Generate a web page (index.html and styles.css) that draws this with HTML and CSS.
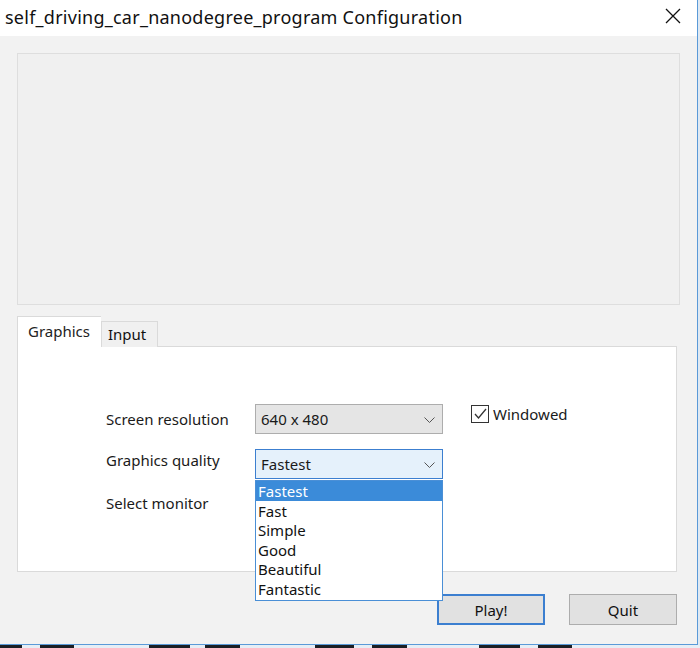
FILE: index.html
```html
<!DOCTYPE html>
<html>
<head>
<meta charset="utf-8">
<link rel="stylesheet" href="styles.css">
</head>
<body>
<div class="window">
  <div class="titlebar">
    <span class="title">self_driving_car_nanodegree_program Configuration</span>
    <svg class="close" width="16" height="16" viewBox="0 0 16 16"><path d="M1 1 L15 15 M15 1 L1 15" stroke="#111" stroke-width="1.3" fill="none"/></svg>
  </div>
  <div class="content">
    <div class="banner"></div>
    <div class="tabs">
      <div class="tab active">Graphics</div>
      <div class="tab">Input</div>
    </div>
    <div class="panel">
      <div class="row">
        <span class="label">Screen resolution</span>
        <div class="combo">
          <span>640 x 480</span>
          <svg class="chev" width="11" height="6" viewBox="0 0 11 6"><path d="M0.5 0.5 L5.5 5.5 L10.5 0.5" stroke="#555" fill="none"/></svg>
        </div>
        <label class="check">
          <span class="box"><svg width="16" height="16" viewBox="0 0 16 16"><path d="M3 8 L6.5 12 L14 3" stroke="#333" stroke-width="1.3" fill="none"/></svg></span>
          <span>Windowed</span>
        </label>
      </div>
      <div class="row row2">
        <span class="label lift">Graphics quality</span>
        <div class="combo open">
          <span>Fastest</span>
          <svg class="chev" width="11" height="6" viewBox="0 0 11 6"><path d="M0.5 0.5 L5.5 5.5 L10.5 0.5" stroke="#555" fill="none"/></svg>
          <ul class="list">
            <li class="sel">Fastest</li>
            <li>Fast</li>
            <li>Simple</li>
            <li>Good</li>
            <li>Beautiful</li>
            <li>Fantastic</li>
          </ul>
        </div>
      </div>
      <div class="row row3">
        <span class="label lift">Select monitor</span>
      </div>
    </div>
    <div class="buttons">
      <button class="btn focus">Play!</button>
      <button class="btn">Quit</button>
    </div>
  </div>
</div>
<div class="taskbar">
  <i class="d" style="width:22px"></i><i class="l" style="width:18px"></i><i class="d" style="width:34px"></i><i class="l" style="width:75px"></i><i class="d" style="width:41px"></i><i class="l" style="width:15px"></i><i class="d" style="width:35px"></i><i class="l" style="width:75px"></i><i class="d" style="width:39px"></i><i class="l" style="width:18px"></i><i class="d" style="width:35px"></i><i class="l" style="width:72px"></i><i class="d" style="width:41px"></i><i class="l" style="width:18px"></i><i class="d" style="width:34px"></i><i class="l" style="flex:1"></i>
</div>
</body>
</html>
```

FILE: styles.css
```css
html, body {
  margin: 0;
  padding: 0;
  width: 700px;
  height: 648px;
  overflow: hidden;
  background: #dfe9f3;
}
body {
  font-family: "Noto Sans", "Open Sans", sans-serif;
  color: #1a1a1a;
}
.window {
  width: 697px;
  height: 644px;
  background: #f2f2f2;
  border-right: 1px solid #5a9ad8;
  border-bottom: 1px solid #5a9ad8;
  display: flex;
  flex-direction: column;
}
.titlebar {
  height: 36px;
  background: #fff;
  display: flex;
  align-items: center;
  justify-content: space-between;
  padding: 0 16px 0 5px;
}
.title {
  font-size: 18px;
  letter-spacing: 0.25px;
  color: #111;
  margin-top: -3px;
}
.close {
  margin-top: -4px;
}
.content {
  padding: 17px 17px 0 17px;
  display: flex;
  flex-direction: column;
}
.banner {
  width: 661px;
  height: 250px;
  background: #f0f0f0;
  border: 1px solid #dedede;
}
.tabs {
  display: flex;
  align-items: flex-end;
  margin-top: 12px;
  height: 30px;
  margin-bottom: -1px;
  position: relative;
  z-index: 1;
}
.tab {
  font-size: 15px;
  height: 26px;
  line-height: 25px;
  padding: 0 6px;
  border: 1px solid #dadada;
  border-bottom: none;
  background: #f0f0f0;
  box-sizing: border-box;
  width: 57px;
  color: #111;
}
.tab.active {
  width: 84px;
  height: 31px;
  line-height: 28px;
  padding: 0 10px;
  background: #fff;
  border-right: none;
  color: #222;
}
.panel {
  width: 658px;
  height: 224px;
  background: #fff;
  border: 1px solid #dadada;
  box-sizing: content-box;
  display: flex;
  flex-direction: column;
}
.row {
  display: flex;
  align-items: center;
  margin-left: 88px;
  height: 30px;
}
.row:first-child {
  margin-top: 57px;
}
.row2 {
  margin-top: 15px;
}
.row3 {
  margin-top: 13px;
}
.label {
  font-size: 15px;
  width: 149px;
  color: #1a1a1a;
}
.label.lift {
  align-self: flex-start;
  margin-top: 1px;
}
.combo {
  width: 188px;
  height: 30px;
  box-sizing: border-box;
  border: 1px solid #adadad;
  background: #e5e5e5;
  display: flex;
  align-items: center;
  justify-content: space-between;
  padding: 0 7px 0 5px;
  font-size: 15px;
  position: relative;
}
.combo.open {
  background: #e5f1fb;
  border-color: #3c7fd0;
}
.chev {
  margin-top: 1px;
}
.check {
  display: flex;
  align-items: center;
  margin-left: 28px;
  align-self: flex-start;
  margin-top: 0;
  font-size: 15px;
  gap: 4px;
}
.box {
  width: 18px;
  height: 18px;
  box-sizing: border-box;
  border: 1px solid #333;
  background: #fff;
  display: flex;
  align-items: center;
  justify-content: center;
}
.list {
  position: absolute;
  left: -1px;
  top: 30px;
  width: 188px;
  height: 121px;
  box-sizing: border-box;
  margin: 0;
  padding: 0;
  list-style: none;
  background: #fff;
  border: 1px solid #4a8fd6;
  z-index: 5;
}
.list li {
  height: 19.5px;
  line-height: 20px;
  padding-left: 2px;
  font-size: 15px;
  color: #111;
}
.list li.sel {
  background: #3b8bd9;
  color: #fff;
}
.buttons {
  display: flex;
  justify-content: flex-end;
  gap: 24px;
  margin-top: 22px;
  width: 660px;
}
.btn {
  width: 108px;
  height: 31px;
  box-sizing: border-box;
  background: #e1e1e1;
  border: 1px solid #adadad;
  font-family: "Noto Sans", "Open Sans", sans-serif;
  font-size: 15px;
  color: #111;
  padding: 0;
}
.btn.focus {
  border: 2px solid #3c7fd0;
}
.taskbar {
  display: flex;
  height: 3px;
}
.taskbar i {
  display: block;
  height: 3px;
}
.taskbar .d { background: #1b1f24; }
.taskbar .l { background: #e6eef6; }
```
